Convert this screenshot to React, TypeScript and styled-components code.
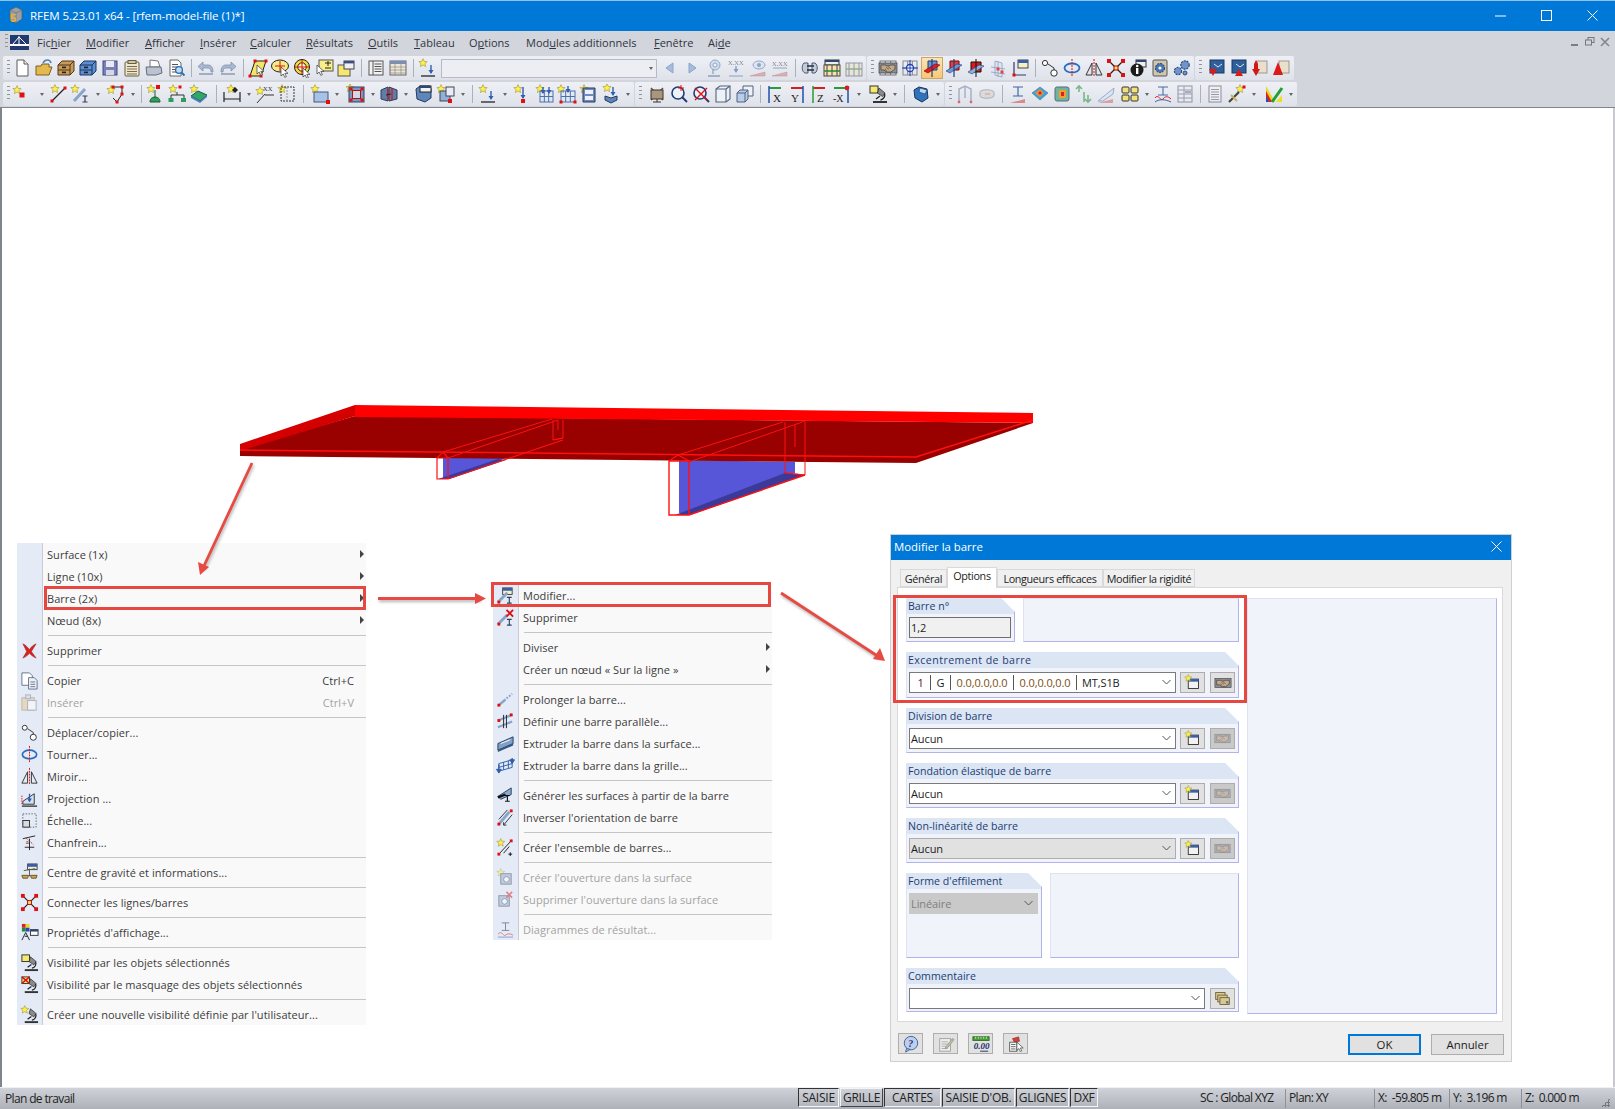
import React from "react";
import styled, { createGlobalStyle } from "styled-components";

const UI = `"Open Sans", "Noto Sans", "Liberation Sans", sans-serif`;

const Global = createGlobalStyle`
  html, body { margin: 0; padding: 0; background: #fff; overflow: hidden; }
  body { font-family: ${UI}; }
`;

/* ---------- icon primitives ---------- */
const starPts = (x: number, y: number, r: number) => {
  const p: string[] = [];
  for (let i = 0; i < 10; i++) {
    const a = -Math.PI / 2 + (i * Math.PI) / 5;
    const q = i % 2 ? r * 0.45 : r;
    p.push(`${(x + q * Math.cos(a)).toFixed(1)},${(y + q * Math.sin(a)).toFixed(1)}`);
  }
  return p.join(" ");
};
const S = ({ x = 5, y = 5, r = 4.4 }: { x?: number; y?: number; r?: number }) => (
  <polygon points={starPts(x, y, r)} fill="#fff04a" stroke="#8d8320" strokeWidth=".5" />
);
const N = ({ x, y, s = 3 }: { x: number; y: number; s?: number }) => (
  <rect x={x - s / 2} y={y - s / 2} width={s} height={s} fill="#e01010" />
);
const Drawer = ({ c, d }: { c: string; d: string }) => (
  <g stroke={d}>
    <path d="M2 7l4-4h12v10l-4 4H2z" fill={c} />
    <path d="M2 7h12v10M14 7l4-4M2 12h12" fill="none" />
    <rect x="6" y="8.6" width="4" height="1.6" fill="#222" stroke="none" />
    <rect x="6" y="13.6" width="4" height="1.6" fill="#222" stroke="none" />
  </g>
);
const Cross = ({ s = "#e01010" }: { s?: string }) => (
  <path d="M4 4l12 12M16 4L4 16" stroke={s} strokeWidth="1.4" fill="none" />
);
const Cursor = ({ x = 10, y = 9 }: { x?: number; y?: number }) => (
  <path transform={`translate(${x} ${y})`} d="M0 0v9l2.2-2 1.6 3.4 1.6-.8-1.6-3.2H7z" fill="#fff" stroke="#333" strokeWidth=".7" />
);
const IBeam = ({ x = 14, y = 12, c = "#33415f" }: { x?: number; y?: number; c?: string }) => (
  <path transform={`translate(${x} ${y})`} d="M-2.5 0h5M0 0v6M-2.5 6h5" stroke={c} strokeWidth="1.2" fill="none" />
);
const Win = ({ x = 6, y = 6, w = 12, h = 12 }: { x?: number; y?: number; w?: number; h?: number }) => (
  <g>
    <rect x={x} y={y} width={w} height={h} fill="#f5efc8" stroke="#333" strokeWidth=".9" />
    <rect x={x} y={y} width={w} height="3" fill="#3a5fa8" />
  </g>
);
const Lines = ({ x, y, w, n, c = "#555" }: { x: number; y: number; w: number; n: number; c?: string }) => (
  <g stroke={c}>{Array.from({ length: n }, (_, i) => <path key={i} d={`M${x} ${y + i * 2.5 + 0.5}h${w}`} />)}</g>
);
const Grid = ({ x, y, w, h, c = "#4a70b0" }: { x: number; y: number; w: number; h: number; c?: string }) => (
  <g stroke={c} fill="none">
    <rect x={x} y={y} width={w} height={h} />
    <path d={`M${x + w / 3} ${y}v${h}M${x + (2 * w) / 3} ${y}v${h}M${x} ${y + h / 2}h${w}`} />
  </g>
);
const Hand = ({ o = 1 }: { o?: number }) => (
  <g opacity={o}>
    <rect x="1" y="5" width="18" height="10" fill="#8a8f98" stroke="#3a3f48" strokeWidth=".7" />
    <path d="M3 7h4l3 1 3-1h4v4l-4 3H9l-3-2H3z" fill="#c2a98c" stroke="#4a3a2a" strokeWidth=".7" />
    <path d="M8 9l3 2.5M10 8.5l3 2.5M7 11l2 1.5" fill="none" stroke="#4a3a2a" strokeWidth=".6" />
  </g>
);
const BlueArrow = ({ x = 14, y = 8, l = 9 }: { x?: number; y?: number; l?: number }) => (
  <g>
    <path d={`M${x} ${y}v${l}`} stroke="#2f5fb0" strokeWidth="1.4" />
    <path d={`M${x - 2.5} ${y + l - 3}L${x} ${y + l + 1}l2.5-4z`} fill="#2f5fb0" />
  </g>
);
const Mic = () => (
  <g>
    <path d="M11 4l6 5-2.5 3.5-5-3.5z" fill="#8a8a8a" stroke="#222" strokeWidth=".7" />
    <path d="M16.5 9.5c1 3-1 6-4 6.5M12 12l-4 3" fill="none" stroke="#222" strokeWidth="1.3" />
    <path d="M5 17h14v2H5z" fill="#333" />
  </g>
);

const icons: Record<string, React.ReactNode> = {
  new: <g><path d="M5 2h7l4 4v12H5z" fill="#fff" stroke="#5a5a5a" /><path d="M12 2v4h4" fill="#eee" stroke="#5a5a5a" /></g>,
  open: <g><path d="M2 8h5l1-2h7v3h3l-3 8H2z" fill="#e4b94f" stroke="#7d6020" /><path d="M9 5c2-4 7-4 8 0" fill="none" stroke="#4b84c4" strokeWidth="1.6" /></g>,
  drawerB: <Drawer c="#c89a5c" d="#543815" />,
  drawerU: <Drawer c="#5d8fd0" d="#1d3560" />,
  save: <g><rect x="3" y="3" width="14" height="14" fill="#7b80b6" stroke="#454a82" /><rect x="6" y="3" width="8" height="6" fill="#e8e9f2" /><rect x="6" y="12" width="8" height="5" fill="#d4d8e4" /></g>,
  clip: <g><rect x="3" y="4" width="14" height="14" rx="1" fill="#efe6cf" stroke="#6a5d3f" /><rect x="6" y="2.5" width="8" height="3" fill="#cfc6ac" stroke="#6a5d3f" /><Lines x={5} y={8} w={10} n={4} c="#7a6c48" /></g>,
  print: <g><path d="M6 2l8 1 2 6H6z" fill="#fff" stroke="#777" /><path d="M2 9h15l1 6-6 2H3z" fill="#bcc3d0" stroke="#666c7a" /></g>,
  preview: <g><path d="M4 2h8l3 3v13H4z" fill="#fff" stroke="#666" /><Lines x={6} y={6} w={6} n={4} /><circle cx="13" cy="12" r="3.4" fill="#bcdcf4" stroke="#2c6cb0" strokeWidth="1.3" /><path d="M15.5 14.5l3 3" stroke="#2c6cb0" strokeWidth="1.8" /></g>,
  undo: <g><path d="M3 16h14" stroke="#8a9ab5" strokeWidth="1.5" /><path d="M7 4L2 8.5 7 13v-3h5c2 0 3 1 3 4h2c0-5-2-7-5-7H7z" fill="#a9bad4" stroke="#7887a3" strokeWidth=".7" /></g>,
  redo: <g transform="matrix(-1 0 0 1 20 0)"><path d="M3 16h14" stroke="#8a9ab5" strokeWidth="1.5" /><path d="M7 4L2 8.5 7 13v-3h5c2 0 3 1 3 4h2c0-5-2-7-5-7H7z" fill="#a9bad4" stroke="#7887a3" strokeWidth=".7" /></g>,
  para: <g><path d="M7 3h11l-5 15H2z" fill="#f4e46a" stroke="#222" /><N x={7} y={3} /><N x={18} y={3} /><N x={2} y={18} /><N x={13} y={18} /><Cursor x={9} y={7} /></g>,
  oval: <g><ellipse cx="10" cy="8" rx="8.5" ry="6" fill="#f5ea86" stroke="#222" /><path d="M10 3v10M5 8h10" stroke="#e01010" /><Cursor x={11} y={9} /></g>,
  ring: <g><circle cx="10" cy="9" r="7.5" fill="#f5d83a" stroke="#222" /><circle cx="10" cy="9" r="4.2" fill="#fff7c0" stroke="#222" /><path d="M10 2v14M3 9h14" stroke="#e01010" /><Cursor x={11} y={10} /></g>,
  note: <g><rect x="5" y="2" width="14" height="11" fill="#f8ee8c" stroke="#555" /><path d="M11 5h6M14 3v5M11 10h6" stroke="#222" /><Cursor x={3} y={7} /></g>,
  winy: <g><rect x="2" y="7" width="12" height="11" fill="#f6e672" stroke="#555" /><rect x="8" y="3" width="10" height="8" fill="#eef0f5" stroke="#444" /><rect x="8" y="3" width="10" height="2.4" fill="#3a4f80" /></g>,
  list: <g><rect x="3" y="3" width="14" height="14" fill="#f2f2f2" stroke="#555" /><path d="M7 3v14" stroke="#555" /><Lines x={8.5} y={5.5} w={7} n={4} /></g>,
  table: <g><rect x="2" y="3" width="16" height="14" fill="#efe7d6" stroke="#666" /><rect x="2" y="3" width="16" height="3" fill="#7a8fb4" /><path d="M7 6v11M13 6v11M2 9h16M2 12h16M2 15h16" stroke="#8b8b8b" strokeWidth=".7" /></g>,
  sLoad: <g><S x={5} y={5} /><BlueArrow x={13} y={7} l={8} /><path d="M3 18h14" stroke="#333" strokeWidth="1.4" /></g>,
  back: <path d="M13 5l-7 5 7 5z" fill="#a5bddf" stroke="#8ba4c9" />,
  fwd: <path d="M7 5l7 5-7 5z" fill="#a5bddf" stroke="#8ba4c9" />,
  pin: <g opacity=".55"><circle cx="11" cy="7" r="5" fill="#b9d2ee" stroke="#4a6c9e" /><circle cx="11" cy="7" r="2" fill="#fff" stroke="#4a6c9e" /><path d="M9 11v5M4 18h12" stroke="#4a6c9e" strokeWidth="1.3" /></g>,
  xLoad: <g opacity=".55"><text x="2" y="7" fontSize="6.5" fontFamily="Liberation Serif" fill="#333">X.XX</text><BlueArrow x={10} y={8} l={6} /><path d="M3 18h14" stroke="#4a6c9e" /></g>,
  eye: <g opacity=".55"><ellipse cx="11" cy="7" rx="6" ry="4" fill="#d3e2f5" stroke="#4a6c9e" /><circle cx="11" cy="7" r="2" fill="#4a6c9e" /><path d="M2 18l15-4v4z" fill="#c88" stroke="#a44" strokeWidth=".5" /></g>,
  xLine: <g opacity=".55"><text x="2" y="8" fontSize="6.5" fontFamily="Liberation Serif" fill="#333">X.XX</text><path d="M3 10h14" stroke="#4a6c9e" /><path d="M2 18l15-4v4z" fill="#c88" stroke="#a44" strokeWidth=".5" /></g>,
  cog: <g><path d="M4 5c-3 3-2 9 1 10h3V5zM12 5h3c3 2 3 8 0 10h-3z" fill="#c5ccd8" stroke="#4d5a72" /><path d="M7 8h7M7 12h7" stroke="#234" strokeWidth="1.4" /></g>,
  calcA: <g><rect x="3" y="2" width="14" height="5" fill="#eee" stroke="#333" /><rect x="3" y="2" width="14" height="2" fill="#2e4676" /><rect x="2" y="7" width="16" height="11" fill="#f6e39e" stroke="#544" /><path d="M5 7v11M10 7v11M15 7v11" stroke="#2e4676" /><path d="M2 13h16" stroke="#2a7a3a" strokeWidth="1.4" /></g>,
  calcB: <g opacity=".55"><rect x="2" y="5" width="16" height="13" fill="#ede4bc" stroke="#556" /><path d="M5 5v13M10 5v13M15 5v13" stroke="#3c5a8a" /><path d="M2 11h16" stroke="#3c7a4a" strokeWidth="1.4" /></g>,
  meshHand: <g><Grid x={2} y={3} w={16} h={14} c="#777" /><Hand /></g>,
  gridT: <g><Grid x={3} y={3} w={14} h={14} c="#888" /><circle cx="10" cy="10" r="3.5" fill="#fff" stroke="#2040b0" strokeWidth="1.3" /><path d="M10 2v16M2 10h16" stroke="#2040b0" /></g>,
  planeR: <g><path d="M6 3h9v9H6z" fill="#6e96d0" stroke="#1f3d7a" /><path d="M2 13l11-7 5 1-12 8z" fill="#e02020" stroke="#7a0000" strokeWidth=".6" /><path d="M10 1v18" stroke="#1f3d7a" strokeWidth="1.2" /></g>,
  planeB: <g><path d="M6 3h9v9H6z" fill="#e04040" stroke="#7a0000" /><path d="M2 13l11-7 5 1-12 8z" fill="#6e96d0" stroke="#1f3d7a" strokeWidth=".6" /><path d="M10 1v18" stroke="#1f3d7a" strokeWidth="1.2" /></g>,
  planeC: <g><path d="M5 4h10v10H5z" fill="#e01818" stroke="#111" /><path d="M2 14l11-7 5 1-12 8z" fill="#8faedb" stroke="#1f3d7a" strokeWidth=".6" /><path d="M10 1v18" stroke="#111" /></g>,
  gridN: <g opacity=".75"><path d="M7 3l7 2v14l-7-2z" fill="#dfe6f3" stroke="#8096bb" /><path d="M3 9l14 2M3 14l14 2M10 3v16" stroke="#8096bb" /><N x={10} y={11} /><N x={14} y={14} /></g>,
  pathWin: <g><Win x={8} y={2} w={10} h={8} /><path d="M4 4v13h12" fill="none" stroke="#2b3d70" strokeWidth="1.2" /><N x={4} y={17} /></g>,
  move: <g fill="#fff" stroke="#333"><circle cx="5" cy="5" r="2.6" /><circle cx="14" cy="15" r="3.2" /><path d="M8 6l6 4v2" fill="none" /></g>,
  rot: <g><ellipse cx="10" cy="10" rx="7.5" ry="4.5" fill="none" stroke="#2c6cc0" strokeWidth="1.8" /><path d="M10 1v18" stroke="#e01010" strokeDasharray="2 1" /></g>,
  mirror: <g fill="none" stroke="#333"><path d="M8 5L2 17h6zM12 5l6 12h-6z" /><path d="M10 1v18" stroke="#e01010" strokeDasharray="2 1" /></g>,
  xcon: <g><path d="M3 3l14 14M17 3L3 17" stroke="#222" strokeWidth="1.3" /><rect x="8" y="8" width="4" height="4" fill="#f4e46a" stroke="#b00" /><N x={3} y={3} s={4} /><N x={17} y={3} s={4} /><N x={3} y={17} s={4} /><N x={17} y={17} s={4} /></g>,
  info: <g><rect x="8" y="2" width="10" height="7" fill="#eee" stroke="#333" /><rect x="8" y="2" width="10" height="2" fill="#2e4676" /><circle cx="9" cy="12" r="6.5" fill="#1b1b1b" /><rect x="8" y="10" width="2.4" height="6" fill="#fff" /><circle cx="9.2" cy="8" r="1.3" fill="#fff" /></g>,
  infoGear: <g><rect x="3" y="2" width="14" height="16" rx="1" fill="#cfc6ac" stroke="#555" /><circle cx="10" cy="10" r="4.6" fill="#4a74b0" stroke="#24406e" strokeDasharray="2 1" /><circle cx="10" cy="10" r="1.6" fill="#fff" /></g>,
  gears: <g><circle cx="13" cy="7" r="4.2" fill="#6e94c8" stroke="#2b4c80" strokeDasharray="2 1" strokeWidth="1.2" /><circle cx="6" cy="13" r="3.6" fill="#6e94c8" stroke="#2b4c80" strokeDasharray="2 1" strokeWidth="1.2" /><circle cx="13" cy="15" r="2" fill="#6e94c8" stroke="#2b4c80" /></g>,
  loadA: <g><rect x="4" y="2" width="14" height="13" fill="#2e5f99" stroke="#163a66" /><path d="M8 6l4 3 4-3" stroke="#d8e8ff" fill="none" /><path d="M3 11l4 7 4-7z" fill="#e01818" /></g>,
  loadB: <g><rect x="4" y="2" width="14" height="13" fill="#2e5f99" stroke="#163a66" /><path d="M8 6l4 3 4-3" stroke="#d8e8ff" fill="none" /><path d="M7 18l4-7 4 7z" fill="#e01818" /></g>,
  redA: <g><rect x="7" y="3" width="10" height="12" fill="#eadfc8" stroke="#999" /><path d="M6 18l4-7H8V6L6 2 4 6v5H2z" fill="#d01818" /></g>,
  redB: <g><rect x="7" y="3" width="10" height="12" fill="#eadfc8" stroke="#999" /><path d="M6 4l5 13H1z" fill="#e01818" /></g>,
  sNode: <g><S x={6} y={6} /><N x={11} y={11} s={5} /></g>,
  sLine: <g><S x={7} y={5} /><path d="M4 17L17 4" stroke="#222" strokeWidth="1.2" /><N x={4} y={17} /><N x={17} y={4} /></g>,
  sBar: <g><S x={5} y={5} /><path d="M4 17L15 5" stroke="#8aa3c8" strokeWidth="3" /><IBeam x={15} y={12} /></g>,
  sPoly: <g><S x={5} y={6} /><path d="M7 3h9v7l-5 8-4-4" fill="none" stroke="#222" /><N x={7} y={3} /><N x={16} y={3} /><N x={16} y={10} /><N x={11} y={18} /></g>,
  sGreen: <g><S x={6} y={5} /><N x={13} y={3} s={4} /><path d="M5 18c0-4 3-5 5-5s5 1 5 5z M10 6v8" fill="#2f9e5a" stroke="#155c30" /></g>,
  sTree: <g><S x={6} y={5} /><N x={13} y={3} /><path d="M10 8v3M4 11h13M4 11v4M17 11v4" fill="none" stroke="#333" /><rect x="1.5" y="14" width="5" height="4" fill="#2f9e5a" /><rect x="14" y="14" width="5" height="4" fill="#2f9e5a" /></g>,
  sSurf: <g><S x={5} y={5} /><path d="M2 12l7-5 9 4-7 6z" fill="#33a56a" stroke="#15603a" /><path d="M2 12v2l9 5 7-6v-2l-7 6z" fill="#4a80c0" /></g>,
  sDim: <g><S x={9} y={5} /><path d="M2 8v10M18 8v10M2 15h16" stroke="#222" strokeWidth="1.2" fill="none" /><path d="M10 6l3-3 3 3-3 3z" fill="#222" /></g>,
  sXX: <g><S x={5} y={7} /><text x="8" y="7" fontSize="6.5" fontFamily="Liberation Serif" fill="#333">XX</text><path d="M2 19L10 10M10 11h9" stroke="#333" /></g>,
  sBox: <g><S x={5} y={5} /><rect x="4" y="3" width="13" height="14" fill="none" stroke="#333" strokeDasharray="2 1" /><path d="M10 3v14" stroke="#999" strokeDasharray="2 1" /></g>,
  sRect: <g><S x={5} y={5} /><rect x="4" y="8" width="14" height="10" fill="#a7c2e4" stroke="#44597f" /><N x={18} y={18} s={4} /></g>,
  sFrame: <g><S x={4} y={4} /><rect x="3" y="3" width="15" height="15" fill="#7d96bb" stroke="#2f4266" /><rect x="6.5" y="6.5" width="8" height="8" fill="#d0d8e8" stroke="#b01010" /><N x={5} y={5} /><N x={16} y={5} /><N x={5} y={16} /><N x={16} y={16} /></g>,
  sColumn: <g><path d="M2 6l7-3v14l-7-2zM10 3l8 3v9l-8 2z" fill="#5e7ea8" stroke="#2b3d5e" /><path d="M9 5v10M13 4v12" stroke="#e01010" strokeWidth="1.2" /><path d="M7 11l5-1" stroke="#222" /></g>,
  solid: <g><path d="M3 5l4-3h10l1 3v9l-6 4-8-3z" fill="#5f86bb" stroke="#223a60" /><rect x="7" y="2" width="11" height="6" fill="#f2f2f2" stroke="#222" /><rect x="7" y="2" width="11" height="2" fill="#2e4676" /></g>,
  sCopy: <g><S x={5} y={5} /><rect x="4" y="7" width="10" height="10" fill="#8fb0d8" stroke="#445" /><rect x="10" y="3" width="8" height="9" fill="#e8edf5" stroke="#445" /><N x={14} y={17} s={4} /></g>,
  sLoadN: <g><S x={6} y={5} /><BlueArrow x={11} y={3} l={11} /><N x={11} y={17} s={4} /></g>,
  sGrid1: <g><S x={5} y={5} /><Grid x={5} y={7} w={13} h={11} /><BlueArrow x={8} y={3} l={6} /><BlueArrow x={14} y={3} l={6} /></g>,
  sGrid2: <g><S x={4} y={5} /><Grid x={4} y={7} w={14} h={11} /><N x={4} y={18} /><N x={18} y={18} /><BlueArrow x={11} y={2} l={6} /></g>,
  sGrid3: <g><S x={5} y={5} /><path d="M4 4h12v14H4z" fill="#6f8cb8" stroke="#26395c" /><rect x="6" y="6" width="8" height="4" fill="#eef" /><rect x="6" y="12" width="8" height="4" fill="#eef" /></g>,
  sPaint: <g><S x={6} y={4} /><BlueArrow x={12} y={3} l={8} /><path d="M4 12l6 2 6-2v4l-6 3-6-3z" fill="#5f86bb" stroke="#26395c" /></g>,
  meshGear: <g><Cross s="#5b4c3c" /><rect x="4" y="6" width="12" height="9" fill="#a8977e" stroke="#3f3326" /><path d="M6 18h8M10 15v3" stroke="#333" /></g>,
  zoomIn: <g><circle cx="9" cy="9" r="6" fill="#eef3fa" stroke="#1d3d78" strokeWidth="1.6" /><path d="M13 13l5 5" stroke="#1d3d78" strokeWidth="2" /><path d="M12 1v6M9 4h6" stroke="#e01010" /></g>,
  zoomOut: <g><circle cx="9" cy="9" r="6" fill="#eef3fa" stroke="#1d3d78" strokeWidth="1.6" /><path d="M13 13l5 5" stroke="#1d3d78" strokeWidth="2" /><Cross /></g>,
  cube: <g fill="#eef1f6" stroke="#52637e" strokeWidth="1.1"><path d="M3 5l4-3h10v13l-4 3H3z" /><path d="M3 5h10v13M13 5l4-3" fill="none" /></g>,
  cubes: <g fill="#eef1f6" stroke="#52637e"><path d="M8 2h10v10H8z" /><path d="M2 9l3-3h8v9l-3 3H2z" fill="#b7cdea" /><path d="M2 9h8v9M10 9l3-3" fill="none" /></g>,
  axX: <g><path d="M4 4h12" stroke="#2a9a3a" strokeWidth="2" /><path d="M4 2v17" stroke="#2050b0" strokeWidth="1.5" /><text x="8" y="18" fontSize="11" fontFamily="Liberation Serif" fill="#222">X</text></g>,
  axY: <g><path d="M4 4h12" stroke="#d02020" strokeWidth="2" /><path d="M16 2v17" stroke="#2050b0" strokeWidth="1.5" /><text x="4" y="18" fontSize="11" fontFamily="Liberation Serif" fill="#222">Y</text></g>,
  axZ: <g><path d="M4 4h12" stroke="#d02020" strokeWidth="2" /><path d="M4 2v17" stroke="#2a9a3a" strokeWidth="1.5" /><text x="8" y="18" fontSize="11" fontFamily="Liberation Serif" fill="#222">Z</text></g>,
  axMX: <g><path d="M2 4h12" stroke="#2a9a3a" strokeWidth="2" /><circle cx="15" cy="4" r="2.4" fill="#d02020" /><path d="M16 6v13" stroke="#2050b0" strokeWidth="1.5" /><text x="1" y="18" fontSize="10" fontFamily="Liberation Serif" fill="#222">-X</text></g>,
  vis: <g><rect x="2" y="2" width="8" height="7" fill="#f5ea70" stroke="#333" /><Mic /></g>,
  vis2: <g><rect x="2" y="2" width="8" height="7" fill="#f5ea70" stroke="#333" /><path d="M2 2l8 7M10 2L2 9" stroke="#e01010" strokeWidth="1.6" /><Mic /></g>,
  vis3: <g><S x={5} y={5} /><Mic /></g>,
  view3d: <g><path d="M3 6l5-3 8 2 1 9-6 4-7-4z" fill="#2f72bd" stroke="#15355e" /><path d="M9 4l7 2-2 4-6-2z" fill="#b9d7f4" stroke="#15355e" strokeWidth=".6" /></g>,
  gFrame: <g opacity=".6"><path d="M4 18V5l6-3 6 3v13M10 2v12" fill="none" stroke="#7b8aa4" strokeWidth="1.5" /><N x={4} y={18} s={2.4} /><N x={16} y={18} s={2.4} /></g>,
  gPill: <g opacity=".5"><path d="M3 8c0-3 13-3 14 0v4c-1 3-14 3-14 0z" fill="#ccc" stroke="#777" /><rect x="8" y="9" width="5" height="2" fill="#d86" /></g>,
  iRes: <g><path d="M5 3h10M10 3v9M5 12h10" stroke="#3f68a8" strokeWidth="1.2" fill="none" /><path d="M2 19l15-4v4z" fill="#d98a8a" /></g>,
  heatA: <g><path d="M2 9l8-6 8 6-8 7z" fill="#37a6d8" stroke="#557" strokeWidth=".5" /><path d="M5 9l5-4 4 4-4 4z" fill="#f09030" /><path d="M8 9l2-2 2 2-2 2z" fill="#e02020" /></g>,
  heatB: <g><rect x="3" y="3" width="14" height="14" rx="2" fill="#6fb4a0" stroke="#5a6a78" /><rect x="7" y="6" width="7" height="8" fill="#f0a030" /><rect x="9" y="8" width="3" height="4" fill="#e02020" /></g>,
  greens: <g opacity=".7"><path d="M5 2v6M2 5l3-3 3 3M14 18v-7M11 15l3 3 3-3M10 8v10" stroke="#4aa35c" strokeWidth="1.6" fill="none" /></g>,
  slash: <g opacity=".75"><path d="M2 17L18 4l-1 6-10 7z" fill="#d8e3f2" stroke="#8096bb" /><path d="M2 19l15-4v4z" fill="#d98a8a" /></g>,
  quad: <g fill="#f3e27a" stroke="#333"><rect x="2" y="3" width="7" height="6" rx="1" /><rect x="11" y="3" width="7" height="6" rx="1" /><rect x="2" y="11" width="7" height="6" rx="1" /><rect x="11" y="11" width="7" height="6" rx="1" /></g>,
  diagram: <g><path d="M5 3h10M10 3v8M5 11h10" stroke="#4a6ca8" strokeWidth="1.1" fill="none" /><path d="M2 14c3-5 6 4 8 1s5-3 8 0" fill="none" stroke="#e02020" /><path d="M2 18c4-3 10-3 16 0" fill="none" stroke="#3a5fb0" /></g>,
  tableB: <g opacity=".65"><rect x="3" y="2" width="14" height="16" fill="#e8edf5" stroke="#667" /><path d="M3 6h14M3 10h14M3 14h14M9 2v16" stroke="#778" /><rect x="10" y="7" width="6" height="2" fill="#88a" /></g>,
  doc: <g opacity=".7"><rect x="4" y="2" width="12" height="16" fill="#f2f2f2" stroke="#667" /><Lines x={6} y={5} w={8} n={5} c="#778" /></g>,
  wand: <g><S x={13} y={5} /><N x={17} y={3} /><path d="M2 18L12 8" stroke="#444" strokeWidth="2.2" /><path d="M4 11l6 6" stroke="#c8b060" strokeWidth="2" /></g>,
  rainbow: <g><path d="M2 2l9 16H2z" fill="#e8d820" /><path d="M2 7l6 11H2z" fill="#e02020" /><path d="M2 12l3 6H2z" fill="#2050c0" /><path d="M8 18L18 4" stroke="#20a030" strokeWidth="3" /><path d="M12 18l6-7v7z" fill="#e8e020" /></g>,
  del: <path d="M3 3c3 1 5 4 7 6 2-3 4-5 7-6l-5 8 5 7c-3-1-5-3-7-5-2 2-4 4-7 5l4-7z" fill="#dd2020" stroke="#8a2020" strokeWidth=".5" />,
  copy: <g stroke="#56667e" strokeWidth=".9"><path d="M2 2h8l3 3v10H2z" fill="#fff" /><path d="M9 7h6l3 3v9H9z" fill="#eef1f6" /><Lines x={11} y={11} w={5} n={3} c="#56667e" /></g>,
  paste: <g opacity=".5"><rect x="2" y="5" width="13" height="13" fill="#e5c987" stroke="#9a8550" /><rect x="6" y="2" width="5" height="4" fill="#d3d8e0" stroke="#778" /><rect x="8" y="8" width="9" height="10" fill="#fff" stroke="#778" /></g>,
  proj: <g><path d="M3 13l12-8v11H3z" fill="#d6e2f2" stroke="#333" /><BlueArrow x={10} y={5} l={8} /><path d="M2 18h16" stroke="#222" strokeWidth="1.3" /><path d="M2 16V7" stroke="#e01010" strokeDasharray="1.5 1" /></g>,
  scale: <g><rect x="3" y="3" width="14" height="14" fill="none" stroke="#666" strokeDasharray="1.5 1.5" /><rect x="3" y="10" width="7" height="7" fill="#d7dbe2" stroke="#333" /></g>,
  chamfer: <g><path d="M3 6L16 3M10 18V6M5 15h10" stroke="#222" fill="none" /><path d="M6 5l8 7" stroke="#d02020" strokeDasharray="1.5 1" /><text x="6" y="12" fontSize="7" fontFamily="Liberation Serif" fill="#222">a</text></g>,
  balance: <g><Win x={8} y={1} w={10} h={6} /><path d="M10 6v8M4 8l12-2" stroke="#555" /><path d="M2 13h7l-1 3H3zM11 13h7l-1 3h-5z" fill="#c9a757" stroke="#6b5720" /></g>,
  props: <g><rect x="2" y="1" width="4" height="4" fill="#e02020" /><rect x="6" y="1" width="4" height="4" fill="#e8d820" /><rect x="2" y="5" width="4" height="4" fill="#1a8f3a" /><rect x="6" y="5" width="4" height="4" fill="#3040c0" /><path d="M2 18l4-8 4 8M5 14h3" stroke="#222" fill="none" /><rect x="11" y="7" width="8" height="6" fill="#fff" stroke="#333" /><rect x="11" y="7" width="8" height="2" fill="#2e4676" /></g>,
  editBar: <g><Win x={7} y={2} w={10} h={7} /><path d="M2 17L12 7" stroke="#8aa3c8" strokeWidth="3" /><IBeam x={14} y={12} /><N x={3} y={17} /></g>,
  delBar: <g><path d="M2 17L12 7" stroke="#8aa3c8" strokeWidth="3" /><IBeam x={14} y={12} /><N x={3} y={17} /><path d="M11 2l7 7M18 2l-7 7" stroke="#e01010" strokeWidth="2" /></g>,
  extend: <g><path d="M3 16l7-6" stroke="#8aa3c8" strokeWidth="2.5" /><path d="M11 9l6-5" stroke="#8aa3c8" strokeWidth="2" strokeDasharray="2 1.5" /><N x={3} y={16} /></g>,
  parallel: <g><path d="M2 9l15-6M2 16l15-6" stroke="#8aa3c8" strokeWidth="2.4" /><path d="M8 3v14M11 3v14" stroke="#222" /><N x={3} y={9} /><N x={16} y={3} /></g>,
  extrude: <g><path d="M2 10l16-7v7L2 17z" fill="#7fa0c8" stroke="#2c3f60" /><path d="M2 17l16-7v2L2 19z" fill="#35527e" /><path d="M5 10l10-4" stroke="#fff" /></g>,
  extrudeG: <g fill="none" stroke="#2f5fa8"><path d="M3 8l14-4v8L3 16z" /><path d="M8 6.5v8M13 5v8M3 12l14-4" /><BlueArrow x={3} y={9} l={8} /><BlueArrow x={17} y={2} l={5} /></g>,
  genSurf: <g><path d="M2 11L16 2v7L5 14z" fill="#8ea8cc" stroke="#2c3f60" /><path d="M2 12l8-3" stroke="#111" strokeWidth="2.4" /><IBeam x={12} y={10} c="#111" /></g>,
  invert: <g><path d="M3 17L14 4" stroke="#8aa3c8" strokeWidth="3" /><path d="M8 18l9-11M8 18v-3M8 18h3M3 12l9-10" stroke="#333" /><N x={3} y={17} /><N x={16} y={3} /></g>,
  setBars: <g><S x={5} y={5} /><path d="M3 17L16 3M8 16l6-7" stroke="#222" /><N x={3} y={17} /><N x={16} y={3} /><path d="M15 15v4M13 17h4" stroke="#111" /></g>,
  openS: <g opacity=".5"><S x={5} y={5} /><rect x="5" y="6" width="11" height="11" fill="#8fb0d8" stroke="#445" /><circle cx="11" cy="12" r="3" fill="#fff" stroke="#445" /></g>,
  openD: <g opacity=".5"><rect x="3" y="6" width="11" height="11" fill="#8fb0d8" stroke="#445" /><circle cx="9" cy="12" r="3" fill="#fff" stroke="#445" /><path d="M11 2l6 6M17 2l-6 6" stroke="#e01010" strokeWidth="1.6" /></g>,
  diagramG: <g opacity=".55"><path d="M6 3h8M10 3v8M6 11h8" stroke="#335" fill="none" /><path d="M2 15c4-5 6 3 8 1s5-2 8 0" fill="none" stroke="#e02020" /><path d="M2 18h16" stroke="#3a5fb0" /></g>,
  newWin: <g><rect x="5" y="6" width="12" height="11" fill="#f2f2f2" stroke="#222" /><rect x="5" y="6" width="12" height="3" fill="#3a5fa8" /><S x={5} y={5} /></g>,
  hand: <Hand />,
  handOff: <Hand o={0.45} />,
  stack: <g fill="#d8c894" stroke="#6b5b30"><rect x="2" y="3" width="11" height="8" /><rect x="4.5" y="6" width="11" height="8" /><rect x="7" y="9" width="11" height="8" /><rect x="14" y="13" width="3" height="3" fill="#777" stroke="none" /></g>,
  help: <g><circle cx="10" cy="9" r="7.5" fill="#bcd0ee" stroke="#3a5a9c" /><path d="M5 15l-1 4 5-3z" fill="#bcd0ee" stroke="#3a5a9c" /><text x="7" y="13" fontSize="11" fontWeight="bold" fontFamily="Liberation Serif" fontStyle="italic" fill="#1d2c6a">?</text></g>,
  edit: <g opacity=".6"><rect x="3" y="4" width="12" height="14" fill="#f5f5f5" stroke="#777" /><Lines x={5} y={7} w={7} n={4} c="#888" /><path d="M10 13l7-9 2 1-7 9-3 1z" fill="#b0b060" stroke="#666" /></g>,
  units: <g><rect x="1" y="2" width="18" height="4" fill="#4aa03a" stroke="#2a6a20" /><path d="M4 2v2M7 2v2M10 2v2M13 2v2M16 2v2" stroke="#d8f0c8" /><text x="2" y="16" fontSize="10" fontStyle="italic" fontWeight="bold" fontFamily="Liberation Serif" fill="#1d2c6a">0.00</text><path d="M9 18h9" stroke="#1d2c6a" /></g>,
  pinCur: <g><path d="M6 4l7-2 1 5-6 1z" fill="#d04040" stroke="#802020" strokeWidth=".5" /><rect x="3" y="8" width="8" height="10" fill="#fff" stroke="#555" /><Lines x={4.5} y={10} w={5} n={3} c="#555" /><Cursor x={11} y={8} /></g>,
};

const IconBox = styled.svg<{ $s: number }>`
  width: ${(p) => p.$s}px;
  height: ${(p) => p.$s}px;
  flex: none;
  display: block;
`;
const Icon = ({ n, s = 18 }: { n: string; s?: number }) => (
  <IconBox $s={s} viewBox="0 0 20 20" aria-hidden>{icons[n]}</IconBox>
);

/* ---------- chrome ---------- */
const Page = styled.div`
  width: 1615px;
  height: 1109px;
  display: flex;
  flex-direction: column;
  background: #fff;
  overflow: hidden;
`;
const TitleBar = styled.div`
  height: 30px;
  box-sizing: content-box;
  border-top: 1px solid #8fc2ec;
  background: #0078d7;
  display: flex;
  align-items: center;
  padding-left: 8px;
  color: #fff;
  font-size: 11.6px;
  letter-spacing: -0.1px;
`;
const TitleIcon = styled.svg`
  margin-bottom: 2px;
  flex: none;
`;
const TitleText = styled.span`
  margin: 0 0 2px 6px;
  white-space: nowrap;
`;
const WinBtns = styled.div`
  margin-left: auto;
  display: flex;
  margin-bottom: 2px;
`;
const WinBtn = styled.div`
  width: 46px;
  height: 28px;
  display: flex;
  align-items: center;
  justify-content: center;
`;
const MenuBar = styled.div`
  height: 24px;
  box-sizing: border-box;
  padding: 0 0 2px 5px;
  background: #d2d5dc;
  display: flex;
  align-items: center;
  font-size: 11px;
  color: #2f3440;
`;
const Grip = styled.div`
  width: 3px;
  height: 16px;
  flex: none;
  background: repeating-linear-gradient(to bottom, #8f939c 0 1.5px, transparent 1.5px 4px);
`;
const BarLogo = styled.div`
  margin-left: 2px;
  width: 19px;
  height: 15px;
  margin-right: 8px;
  flex: none;
`;
const MenuLabel = styled.span<{ $w: number }>`
  width: ${(p) => p.$w}px;
  flex: none;
  white-space: nowrap;
`;
const MdiBtns = styled.div`
  margin-left: auto;
  display: flex;
  gap: 5px;
  padding-right: 5px;
`;
const ToolRow = styled.div`
  height: 26px;
  background: #d2d5dc;
  display: flex;
  padding-left: 3px;
`;
const Seg = styled.div`
  height: 24px;
  margin-top: 1px;
  background: linear-gradient(to bottom, #eef0f6, #dfe2ea);
  border-radius: 2px;
  display: flex;
  align-items: center;
  padding: 0 2px 0 4px;
  box-shadow: inset -1px 0 0 #d2d5dc;
`;
const Tool = styled.div<{ $active?: boolean }>`
  width: 22px;
  height: 22px;
  flex: none;
  display: flex;
  align-items: center;
  justify-content: center;
  box-sizing: border-box;
  ${(p) => p.$active && `background: linear-gradient(#fde6b8,#f9c670); outline: 1px solid #c8a868; outline-offset: -1px;`}
`;
const Sep = styled.div<{ $w: number }>`
  width: ${(p) => p.$w}px;
  height: 18px;
  flex: none;
  display: flex;
  justify-content: center;
  &::after { content: ""; width: 1px; height: 100%; background: #aab0bc; }
`;
const Drop = styled.div`
  width: 11px;
  flex: none;
  display: flex;
  justify-content: center;
  &::after { content: ""; border: 2.5px solid transparent; border-top: 3px solid #666; margin-top: 3px; }
`;
const Space = styled.div<{ $w: number }>`
  width: ${(p) => p.$w}px;
  flex: none;
`;
const Combo = styled.div`
  width: 216px;
  height: 19px;
  flex: none;
  margin: 0 2px;
  background: #eceef3;
  border: 1px solid #b7bbc4;
  box-sizing: border-box;
  position: relative;
  &::after { content: ""; position: absolute; right: 3px; top: 7px; border: 2.5px solid transparent; border-top: 3px solid #666; }
`;

const Viewport = styled.div`
  flex: 1;
  position: relative;
  background: #fff;
  box-shadow: inset 2px 1px 0 #80848c, inset -2px 0 0 #c8cad0;
`;
const Model = styled.svg`
  position: absolute;
  left: 0;
  top: 0;
  width: 1615px;
  height: 981px;
`;

const Status = styled.div`
  height: 22px;
  box-sizing: border-box;
  border-top: 1px solid #eef0f4;
  background: linear-gradient(to bottom, #cfd2d8, #aeb1b8);
  display: flex;
  align-items: center;
  font-size: 12px;
  letter-spacing: -0.65px;
  color: #222;
  position: relative;
  z-index: 2;
`;
const StatusLeft = styled.span`
  width: 798px;
  padding-left: 5px;
  box-sizing: border-box;
  flex: none;
`;
const StatusBtn = styled.span<{ $w: number; $raised?: boolean }>`
  width: ${(p) => p.$w}px;
  height: 19px;
  box-sizing: border-box;
  flex: none;
  margin-top: -2px;
  text-align: center;
  line-height: 17px;
  margin-right: 1px;
  letter-spacing: -0.25px;
  white-space: nowrap;
  border: 1px solid;
  border-color: ${(p) => (p.$raised ? "#f4f4f4 #444 #444 #f4f4f4" : "#333 #f4f4f4 #f4f4f4 #333")};
`;
const StatusCell = styled.span<{ $w: number; $line?: boolean }>`
  width: ${(p) => p.$w}px;
  box-sizing: border-box;
  flex: none;
  padding-left: 3px;
  white-space: nowrap;
  height: 19px;
  margin-top: -1px;
  line-height: 18px;
  ${(p) => p.$line && `border-left: 1px solid #8d9097;`}
`;
const ResizeGrip = styled.div`
  position: absolute;
  right: 5px;
  bottom: 2px;
  width: 9px;
  height: 9px;
  background: radial-gradient(circle, #777 0 1px, transparent 1.2px) 0 0 / 3px 3px;
  clip-path: polygon(100% 0, 100% 100%, 0 100%);
`;

/* ---------- context menus ---------- */
const Popup = styled.div<{ $x: number; $y: number; $w: number }>`
  position: absolute;
  left: ${(p) => p.$x}px;
  top: ${(p) => p.$y}px;
  width: ${(p) => p.$w}px;
  background: linear-gradient(to right, #e4ebf6 25px, #c7cbd3 25px, #c7cbd3 26px, #f9f9f9 26px);
  font-size: 11px;
  color: #3c3c3c;
  letter-spacing: 0.05px;
`;
const Row = styled.div<{ $off?: boolean }>`
  height: 22px;
  display: flex;
  align-items: center;
  position: relative;
  white-space: nowrap;
  color: ${(p) => (p.$off ? "#a3a3a3" : "inherit")};
`;
const Gutter = styled.div`
  width: 25px;
  flex: none;
  display: flex;
  justify-content: center;
  margin-right: 5px;
`;
const Rule = styled.div`
  height: 8px;
  margin-left: 31px;
  display: flex;
  align-items: center;
  &::after { content: ""; height: 1px; flex: 1; background: #c6c6c6; }
`;
const Short = styled.span`
  margin-left: auto;
  margin-right: 12px;
`;
const Arrow = styled.span`
  position: absolute;
  right: 2px;
  top: 7px;
  border: 4px solid transparent;
  border-left: 4px solid #444;
  border-right: 0;
`;
const Mark = styled.div<{ $l: number; $t: number; $r: number; $b: number }>`
  position: absolute;
  left: ${(p) => p.$l}px;
  top: ${(p) => p.$t}px;
  right: ${(p) => p.$r}px;
  bottom: ${(p) => p.$b}px;
  border: 3px solid #e64841;
  pointer-events: none;
`;

/* ---------- dialog ---------- */
const Dialog = styled.div`
  position: absolute;
  left: 890px;
  top: 427px;
  width: 622px;
  height: 528px;
  box-sizing: border-box;
  border: 1px solid #cfcfcf;
  background: #f0f0f0;
  display: flex;
  flex-direction: column;
  font-size: 11px;
  color: #1c1c1c;
`;
const DlgTitle = styled.div`
  height: 25px;
  box-sizing: border-box;
  flex: none;
  background: #0078d7;
  color: #fff;
  display: flex;
  align-items: center;
  justify-content: space-between;
  padding: 0 9px 2px 3px;
  font-size: 11.4px;
`;
const Tabs = styled.div`
  height: 27px;
  flex: none;
  display: flex;
  align-items: flex-end;
  padding-left: 9px;
  position: relative;
  z-index: 1;
`;
const TabBtn = styled.div<{ $on?: boolean; $w: number }>`
  width: ${(p) => p.$w}px;
  height: ${(p) => (p.$on ? 21 : 18)}px;
  margin-bottom: ${(p) => (p.$on ? -1 : 0)}px;
  box-sizing: border-box;
  flex: none;
  background: ${(p) => (p.$on ? "#fff" : "#f0f0f0")};
  border: 1px solid #d9d9d9;
  border-bottom: ${(p) => (p.$on ? "none" : "1px solid #d9d9d9")};
  text-align: center;
  line-height: ${(p) => (p.$on ? 15 : 17)}px;
  white-space: nowrap;
  letter-spacing: -0.35px;
  font-size: 10.8px;
`;
const TabPanel = styled.div`
  width: 606px;
  height: 435px;
  flex: none;
  margin-left: 6px;
  box-sizing: border-box;
  background: #fff;
  border: 1px solid #d9d9d9;
  padding: 10px 5px 0 8px;
  display: flex;
  gap: 9px;
  position: relative;
`;
const LeftCol = styled.div`
  width: 333px;
  flex: none;
  display: flex;
  flex-direction: column;
  align-self: flex-start;
  gap: 10px;
`;
const RightPane = styled.div`
  width: 250px;
  height: 416px;
  margin-left: -1px;
  background: #f0f3f9;
  border: solid #dde3f3;
  border-width: 1px 0 0 1px;
  border-right: 1px solid #b2b2ee;
  border-bottom: 1px solid #b2b2ee;
  box-sizing: border-box;
`;
const GroupRow = styled.div`
  display: flex;
  gap: 8px;
`;
const Group = styled.div<{ $h: number; $w?: number }>`
  height: ${(p) => p.$h}px;
  width: ${(p) => (p.$w ? `${p.$w}px` : "auto")};
  flex: none;
  box-sizing: border-box;
  background: #f0f3f9;
  border: solid #b2b2ee;
  border-width: 0 1px 1px 0;
  border-left: 1px solid #dde3f3;
  clip-path: polygon(0 0, calc(100% - 14px) 0, 100% 14px, 100% 100%, 0 100%);
`;
const Plain = styled(Group)`
  flex: 1;
  clip-path: none;
  border-top: 1px solid #dde3f3;
`;
const GroupHead = styled.div<{ $ls?: number }>`
  height: 16px;
  background: #dbe5f4;
  color: #1d3c72;
  line-height: 16px;
  padding-left: 1px;
  white-space: nowrap;
  font-size: 10.6px;
  letter-spacing: ${(p) => p.$ls ?? 0.02}px;
`;
const GroupBody = styled.div<{ $pt?: number }>`
  display: flex;
  align-items: center;
  padding: ${(p) => p.$pt ?? 4}px 0 0 2px;
`;
const Field = styled.div<{ $w: number; $bg?: string; $line?: string; $fg?: string }>`
  width: ${(p) => p.$w}px;
  height: 21px;
  box-sizing: border-box;
  flex: none;
  display: flex;
  align-items: center;
  background: ${(p) => p.$bg ?? "#fff"};
  border: 1px solid ${(p) => p.$line ?? "#7a7a7a"};
  color: ${(p) => p.$fg ?? "#1c1c1c"};
  padding: 0 0 1px 1px;
  position: relative;
  font-size: 11px;
  letter-spacing: -0.1px;
`;
const Chevron = styled.svg`
  position: absolute;
  right: 4px;
  top: 6px;
  width: 9px;
  height: 7px;
`;
const Cell = styled.span<{ $w: number; $c?: string }>`
  width: ${(p) => p.$w}px;
  box-sizing: border-box;
  flex: none;
  height: 15px;
  line-height: 15px;
  text-align: center;
  color: ${(p) => p.$c ?? "#1c1c1c"};
  border-right: 1px solid #555;
`;
const CellEnd = styled.span`
  margin-left: 5px;
`;
const SmallBtn = styled.div<{ $ml?: number; $off?: boolean }>`
  width: 25px;
  height: 21px;
  box-sizing: border-box;
  flex: none;
  margin-left: ${(p) => p.$ml ?? 4}px;
  background: ${(p) => (p.$off ? "#c9c9c9" : "#e1e1e1")};
  border: 1px solid #adadad;
  display: flex;
  align-items: center;
  justify-content: center;
`;
const DlgFoot = styled.div`
  flex: 1;
  display: flex;
  align-items: flex-start;
  padding: 11px 7px 0 7px;
  gap: 10px;
`;
const Cmd = styled.div<{ $primary?: boolean; $ml?: string }>`
  width: 73px;
  height: 21px;
  box-sizing: border-box;
  margin-top: 1px;
  flex: none;
  margin-left: ${(p) => p.$ml ?? 0};
  background: #e1e1e1;
  border: ${(p) => (p.$primary ? "2px solid #0078d7" : "1px solid #adadad")};
  display: flex;
  align-items: center;
  justify-content: center;
  font-size: 11.4px;
`;

/* ---------- data ---------- */
const row1: string[][] = [
  [":", "_1", "new", "open", "drawerB", "drawerU", "save", "clip", "print", "preview", "|", "undo", "redo", "|", "para", "oval", "ring", "note", "winy", "|", "list", "table", "|", "sLoad", "combo", "back", "fwd", "pin", "xLoad", "eye", "xLine", "|", "cog", "calcA", "calcB"],
  [":", "_3", "meshHand", "gridT", "planeR*", "planeB", "planeC", "gridN", "pathWin", "|", "move", "rot", "mirror", "xcon", "info", "infoGear", "gears"],
  [":", "_3", "loadA", "loadB", "redA", "redB"],
];
const row2: string[][] = [
  [":", "sNode", "_4", "v", "sLine", "sBar", "_1", "v", "_2", "sPoly", "v", "!", "sGreen", "sTree", "sSurf", "_2", "|", "_1", "sDim", "v", "sXX", "sBox", "_1", "|", "_2", "sRect", "v", "_3", "sFrame", "v", "sColumn", "v", "_1", "solid", "_1", "sCopy", "v", "|", "_1", "sLoad", "v", "_1", "sLoadN", "_1", "sGrid1", "sGrid2", "sGrid3", "sPaint", "v"],
  [":", "_4", "meshGear", "zoomIn", "zoomOut", "cube", "cubes", "|", "axX", "axY", "axZ", "_1", "axMX", "v", "_3", "vis", "v", "|", "_2", "view3d", "v"],
  [":", "_2", "gFrame", "gPill", "|", "_1", "iRes", "heatA", "heatB", "greens", "slash", "_2", "quad", "v", "diagram", "tableB", "|", "doc", "wand", "v", "_4", "rainbow", "v"],
];
const menus: [string, number, number?][] = [
  ["Fichier", 49, 3], ["Modifier", 59, 0], ["Afficher", 55, 0], ["Insérer", 50, 0], ["Calculer", 56, 0], ["Résultats", 62, 0],
  ["Outils", 46, 0], ["Tableau", 55, 0], ["Options", 57, 1], ["Modules additionnels", 128, 3], ["Fenêtre", 54, 0], ["Aide", 40, 2],
];

type M = { t?: string; i?: string; off?: boolean; sub?: boolean; key?: string; mark?: boolean };
const menuA: (M | null)[] = [
  { t: "Surface (1x)", sub: true }, { t: "Ligne (10x)", sub: true }, { t: "Barre (2x)", sub: true, mark: true }, { t: "Nœud (8x)", sub: true }, null,
  { t: "Supprimer", i: "del" }, null,
  { t: "Copier", i: "copy", key: "Ctrl+C" }, { t: "Insérer", i: "paste", key: "Ctrl+V", off: true }, null,
  { t: "Déplacer/copier...", i: "move" }, { t: "Tourner...", i: "rot" }, { t: "Miroir...", i: "mirror" }, { t: "Projection ...", i: "proj" }, { t: "Échelle...", i: "scale" }, { t: "Chanfrein...", i: "chamfer" }, null,
  { t: "Centre de gravité et informations...", i: "balance" }, null,
  { t: "Connecter les lignes/barres", i: "xcon" }, null,
  { t: "Propriétés d'affichage...", i: "props" }, null,
  { t: "Visibilité par les objets sélectionnés", i: "vis" }, { t: "Visibilité par le masquage des objets sélectionnés", i: "vis2" }, null,
  { t: "Créer une nouvelle visibilité définie par l'utilisateur...", i: "vis3" },
];
const menuB: (M | null)[] = [
  { t: "Modifier...", i: "editBar", mark: true }, { t: "Supprimer", i: "delBar" }, null,
  { t: "Diviser", sub: true }, { t: "Créer un nœud « Sur la ligne »", sub: true }, null,
  { t: "Prolonger la barre...", i: "extend" }, { t: "Définir une barre parallèle...", i: "parallel" }, { t: "Extruder la barre dans la surface...", i: "extrude" }, { t: "Extruder la barre dans la grille...", i: "extrudeG" }, null,
  { t: "Générer les surfaces à partir de la barre", i: "genSurf" }, { t: "Inverser l'orientation de barre", i: "invert" }, null,
  { t: "Créer l'ensemble de barres...", i: "setBars" }, null,
  { t: "Créer l'ouverture dans la surface", i: "openS", off: true }, { t: "Supprimer l'ouverture dans la surface", i: "openD", off: true }, null,
  { t: "Diagrammes de résultat...", i: "diagramG", off: true },
];

const Chev = () => (
  <Chevron viewBox="0 0 9 7"><path d="M.5 1l4 4 4-4" fill="none" stroke="#555" /></Chevron>
);

const ToolBarRow = ({ segs }: { segs: string[][] }) => (
  <ToolRow>
    {segs.map((seg, si) => (
      <Seg key={si}>
        {seg.map((t, i) => {
          if (t === ":") return <Grip key={i} />;
          if (t === "|") return <Sep key={i} $w={8} />;
          if (t === "!") return <Sep key={i} $w={6} />;
          if (t === "v") return <Drop key={i} />;
          if (t === "combo") return <Combo key={i} />;
          if (t[0] === "_") return <Space key={i} $w={+t.slice(1)} />;
          const active = t.endsWith("*");
          return (
            <Tool key={i} $active={active}>
              <Icon n={active ? t.slice(0, -1) : t} s={20} />
            </Tool>
          );
        })}
      </Seg>
    ))}
  </ToolRow>
);

const PopupMenu = ({ x, y, w, items, mark }: { x: number; y: number; w: number; items: (M | null)[]; mark: [number, number, number, number] }) => (
  <Popup $x={x} $y={y} $w={w}>
    {items.map((m, i) =>
      m === null ? <Rule key={i} /> : (
        <Row key={i} $off={m.off}>
          <Gutter>{m.i && <Icon n={m.i} s={19} />}</Gutter>
          {m.t}
          {m.key && <Short>{m.key}</Short>}
          {m.sub && <Arrow />}
          {m.mark && <Mark $l={mark[0]} $t={mark[1]} $r={mark[2]} $b={mark[3]} />}
        </Row>
      )
    )}
  </Popup>
);

const PickRow = ({ title, value, bg, line }: { title: string; value: string; bg?: string; line?: string }) => (
  <Group $h={45}>
    <GroupHead>{title}</GroupHead>
    <GroupBody>
      <Field $w={267} $bg={bg} $line={line}>{value}<Chev /></Field>
      <SmallBtn><Icon n="newWin" s={17} /></SmallBtn>
      <SmallBtn $ml={5} $off><Icon n="handOff" s={17} /></SmallBtn>
    </GroupBody>
  </Group>
);

export default function App() {
  return (
    <Page>
      <Global />
      <TitleBar>
        <TitleIcon width="16" height="18" viewBox="0 0 16 18">
          <path d="M8 1l6 3v9l-6 4-6-3V4z" fill="#9aa0a8" stroke="#555" strokeWidth=".6" />
          <path d="M2 4l6 3 6-3M8 7v10" stroke="#666" strokeWidth=".6" fill="none" />
          <text x="2" y="16" fontSize="11" fontWeight="bold" fontFamily="Liberation Sans" fill="#f0b020">5</text>
        </TitleIcon>
        <TitleText>RFEM 5.23.01 x64 - [rfem-model-file (1)*]</TitleText>
        <WinBtns>
          <WinBtn><svg width="11" height="11"><path d="M0 6h11" stroke="#fff" /></svg></WinBtn>
          <WinBtn><svg width="11" height="11"><rect x=".5" y=".5" width="10" height="10" fill="none" stroke="#fff" /></svg></WinBtn>
          <WinBtn><svg width="11" height="11"><path d="M.5.5l10 10M10.5.5l-10 10" stroke="#fff" /></svg></WinBtn>
        </WinBtns>
      </TitleBar>
      <MenuBar>
        <Grip />
        <BarLogo>
          <svg width="19" height="15" viewBox="0 0 19 15">
            <rect width="19" height="15" fill="#1e3a70" />
            <rect y="9" width="19" height="2" fill="#fff" />
            <path d="M9 1v8M9 2L3 9M9 2l7 7" stroke="#fff" fill="none" />
          </svg>
        </BarLogo>
        {menus.map(([t, w, u]) => (
          <MenuLabel key={t} $w={w}>
            {t.slice(0, u)}<u>{t[u ?? 0]}</u>{t.slice((u ?? 0) + 1)}
          </MenuLabel>
        ))}
        <MdiBtns>
          <svg width="10" height="10"><path d="M1 8h7" stroke="#666" strokeWidth="1.6" /></svg>
          <svg width="10" height="10"><rect x="3" y=".5" width="6" height="5" fill="none" stroke="#777" /><rect x=".5" y="3" width="6" height="5" fill="#d2d5dc" stroke="#777" /></svg>
          <svg width="10" height="10"><path d="M1 1l8 8M9 1L1 9" stroke="#888" strokeWidth="1.7" /></svg>
        </MdiBtns>
      </MenuBar>
      <ToolBarRow segs={row1} />
      <ToolBarRow segs={row2} />

      <Viewport>
        <Model viewBox="0 107 1615 981">
          <polygon points="443,458 506,458 449,479 443,479" fill="#5856d8" />
          <polygon points="438,479 449,479 506,460 498,459" fill="#3c3a98" />
          <polygon points="679,460 795,462 795,473 785,474 689,513 679,513" fill="#5856d8" />
          <polygon points="675,515 690,515 805,475 785,473" fill="#3c3a98" />
          <polygon points="355,416 1033,423 916,463 240,456 240,449" fill="#990000" />
          <polygon points="240,444 355,405 355,416 240,451" fill="#d40000" />
          <polygon points="355,405 1033,413 1033,423 355,417" fill="#ff0000" />
          <g fill="none" stroke="#ff1010">
            <path d="M240 450L916 457L1033 420" strokeWidth="1.5" />
            <path d="M437 458h11v21h-11zM443 452l-6 6M443 452l5 6M448 479L563 440" strokeWidth="1.2" />
            <path d="M443 452L552 419M448 458L558 420M553 420v20l10-2v-18M553 440l10-2M558 420v10" />
            <path d="M669 461h20v54h-20zM669 461l9-6 11 6M670 515h19L805 475" strokeWidth="1.4" />
            <path d="M678 455L783 422M689 462L805 421M785 422v51l20 2v-53M795 425v22M785 473l20 2" />
          </g>
        </Model>

        <PopupMenu x={17} y={436} w={349} items={menuA} mark={[27, -1, 0, -1]} />
        <PopupMenu x={493} y={477} w={279} items={menuB} mark={[-2, -2, 1, -1]} />

        <Model viewBox="0 107 1615 981">
          <g fill="none" stroke="#e64a42" strokeWidth="2.8" style={{ filter: "drop-shadow(1px 2px 1.5px rgba(0,0,0,.3))" }}>
            <path d="M252 463L203 568" />
            <path d="M378 598.5H480" />
            <path d="M781 593L879 657" />
          </g>
          <g fill="#e64a42">
            <polygon points="200,575 198,562 209,567" />
            <polygon points="486,598.5 475,593 475,604" />
            <polygon points="885,661 873,659 880,648" />
          </g>
        </Model>

        <Dialog>
          <DlgTitle>
            Modifier la barre
            <svg width="11" height="11"><path d="M.5.5l10 10M10.5.5l-10 10" stroke="#fff" /></svg>
          </DlgTitle>
          <Tabs>
            <TabBtn $w={47}>Général</TabBtn>
            <TabBtn $w={50} $on>Options</TabBtn>
            <TabBtn $w={106}>Longueurs efficaces</TabBtn>
            <TabBtn $w={92}>Modifier la rigidité</TabBtn>
          </Tabs>
          <TabPanel>
            <LeftCol>
              <GroupRow>
                <Group $h={44} $w={109}>
                  <GroupHead>Barre n°</GroupHead>
                  <GroupBody $pt={3}>
                    <Field $w={102} $bg="#f0f0f0" $line="#6f6f6f">1,2</Field>
                  </GroupBody>
                </Group>
                <Plain $h={44} />
              </GroupRow>
              <Group $h={46}>
                <GroupHead $ls={0.45}>Excentrement de barre</GroupHead>
                <GroupBody>
                  <Field $w={267}>
                    <Cell $w={20} $c="#5a1030">1</Cell>
                    <Cell $w={20}>G</Cell>
                    <Cell $w={63} $c="#7d4e12">0.0,0.0,0.0</Cell>
                    <Cell $w={63} $c="#7d4e12">0.0,0.0,0.0</Cell>
                    <CellEnd>MT,S1B</CellEnd>
                    <Chev />
                  </Field>
                  <SmallBtn><Icon n="newWin" s={17} /></SmallBtn>
                  <SmallBtn $ml={5}><Icon n="hand" s={18} /></SmallBtn>
                </GroupBody>
              </Group>
              <PickRow title="Division de barre" value="Aucun" />
              <PickRow title="Fondation élastique de barre" value="Aucun" />
              <PickRow title="Non-linéarité de barre" value="Aucun" bg="#e1e1e1" line="#adadad" />
              <GroupRow>
                <Group $h={85} $w={136}>
                  <GroupHead>Forme d'effilement</GroupHead>
                  <GroupBody>
                    <Field $w={129} $bg="#c9c9c9" $line="#c9c9c9" $fg="#808080">Linéaire<Chev /></Field>
                  </GroupBody>
                </Group>
                <Plain $h={85} />
              </GroupRow>
              <Group $h={44}>
                <GroupHead>Commentaire</GroupHead>
                <GroupBody>
                  <Field $w={296}><Chev /></Field>
                  <SmallBtn $ml={5}><Icon n="stack" s={17} /></SmallBtn>
                </GroupBody>
              </Group>
            </LeftCol>
            <RightPane />
            <Mark $l={-5} $t={7} $r={255} $b={318} />
          </TabPanel>
          <DlgFoot>
            <SmallBtn $ml={0}><Icon n="help" s={18} /></SmallBtn>
            <SmallBtn $ml={0}><Icon n="edit" s={18} /></SmallBtn>
            <SmallBtn $ml={0}><Icon n="units" s={18} /></SmallBtn>
            <SmallBtn $ml={0}><Icon n="pinCur" s={18} /></SmallBtn>
            <Cmd $primary $ml="auto">OK</Cmd>
            <Cmd>Annuler</Cmd>
          </DlgFoot>
        </Dialog>
      </Viewport>

      <Status>
        <StatusLeft>Plan de travail</StatusLeft>
        <StatusBtn $w={41}>SAISIE</StatusBtn>
        <StatusBtn $w={43} $raised>GRILLE</StatusBtn>
        <StatusBtn $w={57}>CARTES</StatusBtn>
        <StatusBtn $w={73}>SAISIE D'OB.</StatusBtn>
        <StatusBtn $w={53}>GLIGNES</StatusBtn>
        <StatusBtn $w={28}>DXF</StatusBtn>
        <StatusCell $w={98} />
        <StatusCell $w={88}>SC : Global XYZ</StatusCell>
        <StatusCell $w={89} $line>Plan: XY</StatusCell>
        <StatusCell $w={75} $line>X: &nbsp;-59.805 m</StatusCell>
        <StatusCell $w={72} $line>Y: &nbsp;3.196 m</StatusCell>
        <StatusCell $w={80} $line>Z: &nbsp;0.000 m</StatusCell>
        <ResizeGrip />
      </Status>
    </Page>
  );
}
